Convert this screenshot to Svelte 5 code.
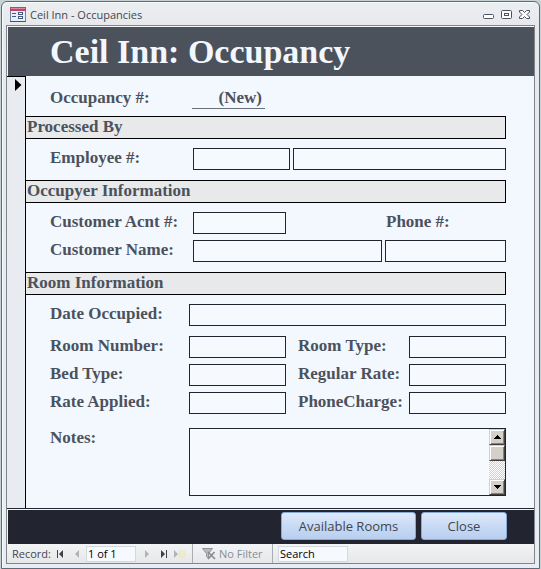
<script>
  let record = $state('1 of 1');
  let search = $state('Search');
  let occupancy = $state('(New)');

  const roomFields = [
    ['Room Number:', 'room-number'],
    ['Room Type:', 'room-type'],
    ['Bed Type:', 'bed-type'],
    ['Regular Rate:', 'regular-rate'],
    ['Rate Applied:', 'rate-applied'],
    ['PhoneCharge:', 'phone-charge'],
  ];
</script>

<div class="window">
  <header class="titlebar">
    <svg class="form-icon" width="16" height="15" viewBox="0 0 16 15" aria-hidden="true">
      <rect x="0.5" y="0.5" width="15" height="14" fill="#e9eff8" stroke="#7283a8" />
      <rect x="0" y="0" width="16" height="4" fill="#b8476b" />
      <rect x="1" y="1" width="14" height="1" fill="#dc8aa3" />
      <path d="M2 6.5h4M2 9.5h4M8 9.5h1" stroke="#405a80" />
      <rect x="8.5" y="5.5" width="4" height="2" fill="#fff" stroke="#405a80" />
      <rect x="8.5" y="9.5" width="4" height="2" fill="#fff" stroke="#405a80" />
      <path d="M0 14.5h16" stroke="#3f5286" />
    </svg>
    <span class="caption">Ceil Inn - Occupancies</span>
    <button class="control" aria-label="Minimize">
      <svg width="12" height="10" viewBox="0 0 12 10">
        <rect x="0.5" y="4.5" width="10" height="4" rx="1" fill="#fff" stroke="#4c5063" />
      </svg>
    </button>
    <button class="control" aria-label="Maximize">
      <svg width="12" height="10" viewBox="0 0 12 10">
        <rect x="0.5" y="0.5" width="10" height="8" rx="1" fill="#fff" stroke="#4c5063" />
        <rect x="3.5" y="3.5" width="4" height="2" fill="#fff" stroke="#4c5063" />
      </svg>
    </button>
    <button class="control" aria-label="Close window">
      <svg width="12" height="10" viewBox="0 0 12 10">
        <path d="M0.5 0.5h3l2 2 2-2h3v1.5l-2.5 2.5 2.5 2.5v1.5h-3l-2-2-2 2h-3v-1.5l2.5-2.5-2.5-2.5z" fill="#fff" stroke="#4c5063" />
      </svg>
    </button>
  </header>

  <main class="frame">
    <h1>Ceil Inn: Occupancy</h1>

    <div class="body">
      <div class="selector">
        <svg width="7" height="12" viewBox="0 0 7 12" aria-hidden="true"><path d="M0 0l6.5 6-6.5 6z" fill="#000" /></svg>
      </div>
      <form class="form">
        <div class="group first">
          <div class="row occupancy">
            <label for="occupancy">Occupancy #:</label>
            <input id="occupancy" class="number" readonly bind:value={occupancy} />
          </div>
        </div>

        <h2>Processed By</h2>
        <div class="group">
          <div class="row employee">
            <label for="employee">Employee #:</label>
            <input id="employee" />
            <input aria-label="Employee name" />
          </div>
        </div>

        <h2>Occupyer Information</h2>
        <div class="group">
          <div class="row account">
            <label for="account">Customer Acnt #:</label>
            <input id="account" />
            <label for="phone" class="phone">Phone #:</label>
            <output id="phone"></output>
          </div>
          <div class="row customer">
            <label for="customer">Customer Name:</label>
            <input id="customer" />
            <input aria-label="Customer last name" />
          </div>
        </div>

        <h2>Room Information</h2>
        <div class="group">
          <div class="row wide">
            <label for="date">Date Occupied:</label>
            <input id="date" />
          </div>
          <div class="room">
            {#each roomFields as [text, id]}
              <label for={id}>{text}</label>
              <input {id} />
            {/each}
          </div>
          <div class="row wide notes">
            <label for="notes">Notes:</label>
            <div class="memo">
              <textarea id="notes"></textarea>
              <div class="scroll">
                <button type="button" class="raised" aria-label="Scroll up">
                  <svg width="7" height="4" viewBox="0 0 7 4"><path d="M3 0h1v1h1v1h1v1h1v1h-7v-1h1v-1h1v-1h1z" /></svg>
                </button>
                <div class="raised"></div>
                <div class="track"></div>
                <button type="button" class="raised" aria-label="Scroll down">
                  <svg width="7" height="4" viewBox="0 0 7 4"><path d="M0 0h7v1h-1v1h-1v1h-1v1h-1v-1h-1v-1h-1v-1h-1z" /></svg>
                </button>
              </div>
            </div>
          </div>
        </div>
      </form>
    </div>

    <footer class="actions">
      <button class="action rooms">Available Rooms</button>
      <button class="action close">Close</button>
    </footer>

    <nav class="status" aria-label="Records">
      <label for="record" class="record">Record:</label>
      <button class="nav" aria-label="First record">
        <svg width="8" height="8" viewBox="0 0 8 8"><path d="M1 0h1v8h-1zM7 0v8l-4-4z" fill="#3e4148" /></svg>
      </button>
      <button class="nav" aria-label="Previous record">
        <svg width="8" height="8" viewBox="0 0 8 8"><path d="M6 0v8l-4-4z" fill="#b0b3b8" /></svg>
      </button>
      <input id="record" class="position" bind:value={record} />
      <button class="nav" aria-label="Next record">
        <svg width="8" height="8" viewBox="0 0 8 8"><path d="M2 0v8l4-4z" fill="#b0b3b8" /></svg>
      </button>
      <button class="nav" aria-label="Last record">
        <svg width="8" height="8" viewBox="0 0 8 8"><path d="M1 0v8l4-4zM6 0h1v8h-1z" fill="#3e4148" /></svg>
      </button>
      <button class="new" aria-label="New record">
        <svg width="14" height="8" viewBox="0 0 14 8">
          <path d="M1 0v8l4-4z" fill="#b0b3b8" />
          <path d="M9 0v8M5 4h8M6 1l6 6M12 1l-6 6" stroke="#eee6bd" stroke-width="1.5" />
          <circle cx="9" cy="4" r="2" fill="#f3ecc8" />
        </svg>
      </button>
      <button class="filter">
        <svg width="14" height="14" viewBox="0 0 14 14" aria-hidden="true">
          <path d="M0.5 1.5h10l-4 5v5l-2-2v-3z" fill="#b9babd" stroke="#929397" />
          <path d="M6 5l7 7M12.5 5l-6.5 7" stroke="#8b8c90" stroke-width="1.7" />
        </svg>
        No Filter
      </button>
      <input class="search" aria-label="Search" bind:value={search} />
    </nav>
  </main>
</div>

<style>
  :global(body) {
    margin: 0;
    background: #c6d2d6;
  }
  * {
    box-sizing: border-box;
  }
  button,
  input,
  textarea {
    margin: 0;
    padding: 0;
    border: 0;
    border-radius: 0;
    background: none;
    font: inherit;
    color: inherit;
    min-width: 0;
    outline: none;
  }
  svg {
    display: block;
    flex: none;
  }

  .window {
    margin: 1px 1px 0;
    padding: 0 4px 4px;
    border: 1px solid #5f6b78;
    border-radius: 6px 6px 0 0;
    background: linear-gradient(#eceff1, #e6e8eb 24px, #e9ecf2);
    box-shadow: inset 1px 1px 0 #f8fafc;
    font-family: 'Open Sans', 'Noto Sans', sans-serif;
    font-size: 11px;
    color: #43464d;
  }
  .titlebar {
    display: flex;
    align-items: center;
    height: 23px;
    padding: 2px 4px 0;
  }
  .caption {
    flex: 1;
    padding-left: 4px;
    line-height: 16px;
  }
  .control {
    margin-left: 6px;
  }

  .frame {
    border: 1px solid #7f858d;
  }
  h1 {
    margin: 0;
    padding-left: 42px;
    border: solid #f4f6f9;
    border-width: 1px 0 0 1px;
    background: #4c525c;
    color: #f2f7ff;
    font: bold 34px/49px 'Liberation Serif', 'Times New Roman', serif;
  }

  .body {
    display: flex;
    border-bottom: 1px solid #22242f;
    background: #f3f8ff;
  }
  .selector {
    width: 19px;
    padding: 2px 0 0 8px;
    border: solid #000;
    border-width: 1px 1px 0 0;
    background: #e8ebf0;
  }
  .form {
    flex: 1;
    padding: 12px 28px 2px 0;
    font: bold 17px/20px 'Liberation Serif', 'Times New Roman', serif;
    color: #4c525c;
  }
  h2 {
    margin: 0;
    height: 23px;
    padding-left: 1px;
    border: solid #000;
    border-width: 1px 1px 1px 0;
    background: #e8e9ea;
    font: inherit;
  }
  .group {
    display: flex;
    flex-direction: column;
    gap: 6px;
    padding: 9px 0 10px 24px;
  }
  .group.first {
    padding: 0 0 7px 24px;
  }
  .row,
  .room {
    display: grid;
  }
  .group input,
  .memo {
    width: 100%;
    height: 22px;
    border: 1px solid #22242f;
    background: #f6faff;
  }
  .group input {
    padding: 0 3px;
  }
  .occupancy {
    grid-template-columns: 142px 73px;
  }
  .group .number {
    height: 21px;
    border-width: 0 0 1px;
    border-color: #6b6f78;
    background: none;
    text-align: right;
  }
  .employee {
    grid-template-columns: 140px 97px 1fr;
    column-gap: 3px;
  }
  .account {
    grid-template-columns: 143px 93px 1fr 70px 50px;
  }
  .phone {
    grid-column: 4;
  }
  .customer {
    grid-template-columns: 140px 189fr 121fr;
    column-gap: 3px;
  }
  .wide {
    grid-template-columns: 139px 1fr;
  }
  .room {
    grid-template-columns: 139px 1fr 123px 1fr;
    row-gap: 6px;
    padding: 4px 0 8px;
  }
  .room label:nth-of-type(even) {
    padding-left: 12px;
  }
  .memo {
    display: flex;
    height: 68px;
  }
  textarea {
    flex: 1;
    height: 100%;
    padding: 2px 3px;
    resize: none;
    overflow: hidden;
  }
  .scroll {
    display: flex;
    flex-direction: column;
    width: 16px;
  }
  .raised {
    display: flex;
    align-items: center;
    justify-content: center;
    width: 16px;
    height: 16px;
    border: 1px solid;
    border-color: #d4d0c8 #404040 #404040 #d4d0c8;
    background: #d4d0c8;
    box-shadow: inset 1px 1px 0 #fff, inset -1px -1px 0 #808080;
  }
  .track {
    flex: 1;
    background: repeating-conic-gradient(#d4d0c8 0 25%, #fff 0 50%) 0 0 / 2px 2px;
  }

  .actions {
    display: flex;
    justify-content: flex-end;
    gap: 5px;
    height: 35px;
    padding: 2px 27px 0 0;
    border: solid #f4f6f9;
    border-width: 1px 0 0 1px;
    background: #22242f;
  }
  .action {
    height: 28px;
    border: 1px solid #86a9d8;
    border-radius: 3px;
    background: linear-gradient(#dfeafa, #c9dbf5 45%, #b9cff0);
    font-size: 13px;
    line-height: 24px;
    color: #404650;
  }
  .rooms {
    width: 135px;
  }
  .close {
    width: 86px;
  }

  .status {
    display: flex;
    align-items: center;
    height: 19px;
    padding-left: 5px;
    background: linear-gradient(#f3f4f6, #e6e7e9);
    line-height: 15px;
  }
  .record {
    width: 44px;
  }
  .nav {
    width: 8px;
    margin-right: 9px;
  }
  .nav:has(+ .position) {
    margin-right: 5px;
  }
  .position,
  .search {
    height: 16px;
    padding: 0 1px;
    border: 1px solid #d3d7de;
    background: #f6faff;
    color: #000;
  }
  .position {
    width: 50px;
    margin-right: 7px;
  }
  .nav:has(+ .new) {
    margin-right: 5px;
  }
  .filter {
    display: flex;
    align-items: center;
    gap: 3px;
    width: 81px;
    height: 19px;
    margin-left: 5px;
    padding-left: 9px;
    border: solid #a9adb4;
    border-width: 0 1px;
    color: #8b8d92;
  }
  .search {
    width: 70px;
    margin-left: 5px;
  }
</style>
